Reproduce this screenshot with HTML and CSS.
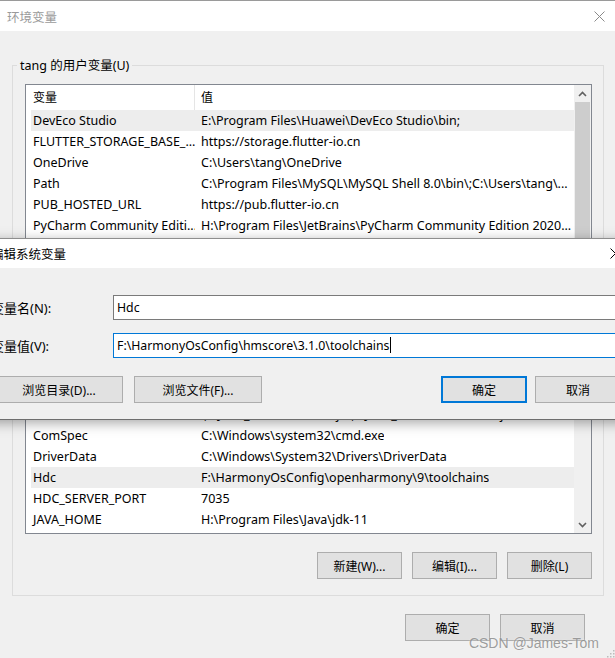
FILE: index.html
```html
<!DOCTYPE html>
<html lang="zh-CN">
<head>
<meta charset="utf-8">
<title>环境变量</title>
<link rel="stylesheet" href="styles.css">
</head>
<body>
<div class="win">
  <div class="titlebar">
    <span class="title">环境变量</span>
    <svg class="close" width="11" height="11" viewBox="0 0 11 11"><path d="M0.5 0.5L10.5 10.5M10.5 0.5L0.5 10.5" stroke="#8a8a8a" stroke-width="1" fill="none"/></svg>
  </div>
  <div class="winbody">
    <div class="group">
      <span class="legend">tang 的用户变量(U)</span>
      <div class="list">
        <div class="rows">
          <div class="hdr"><span class="c1">变量</span><span class="c2">值</span></div>
          <div class="row sel"><span class="c1">DevEco Studio</span><span class="c2">E:\Program Files\Huawei\DevEco Studio\bin;</span></div>
          <div class="row"><span class="c1">FLUTTER_STORAGE_BASE_...</span><span class="c2">https://storage.flutter-io.cn</span></div>
          <div class="row"><span class="c1">OneDrive</span><span class="c2">C:\Users\tang\OneDrive</span></div>
          <div class="row"><span class="c1">Path</span><span class="c2">C:\Program Files\MySQL\MySQL Shell 8.0\bin\;C:\Users\tang\...</span></div>
          <div class="row"><span class="c1">PUB_HOSTED_URL</span><span class="c2">https://pub.flutter-io.cn</span></div>
          <div class="row"><span class="c1">PyCharm Community Editi...</span><span class="c2">H:\Program Files\JetBrains\PyCharm Community Edition 2020...</span></div>
          <div class="row"><span class="c1">TEMP</span><span class="c2">C:\Users\tang\AppData\Local\Temp</span></div>
          <div class="row"><span class="c1">TMP</span><span class="c2">C:\Users\tang\AppData\Local\Temp</span></div>
          <div class="row"><span class="c1">ANDROID_HOME</span><span class="c2">D:\Android\Sdk</span></div>
          <div class="row"><span class="c1">ANDROID_SDK_HOME</span><span class="c2">D:\Android\avd</span></div>
          <div class="row"><span class="c1">ChocolateyInstall</span><span class="c2">C:\ProgramData\chocolatey</span></div>
          <div class="row"><span class="c1">CLASSPATH</span><span class="c2">.;%JAVA_HOME%\lib\dt.jar;%JAVA_HOME%\lib\tools.jar</span></div>
          <div class="row"><span class="c1">CLASSPATH</span><span class="c2">.;%JAVA_HOME%\lib\dt.jar;%JAVA_HOME%\lib\tools.jar</span></div>
          <div class="row"><span class="c1">CLASSPATH</span><span class="c2">.;%JAVA_HOME%\lib\dt.jar;%JAVA_HOME%\lib\tools.jar</span></div>
          <div class="row"><span class="c1">CLASSPATH</span><span class="c2">.;%JAVA_HOME%\lib\dt.jar;%JAVA_HOME%\lib\tools.jar</span></div>
          <div class="row"><span class="c1">ComSpec</span><span class="c2">C:\Windows\system32\cmd.exe</span></div>
          <div class="row"><span class="c1">DriverData</span><span class="c2">C:\Windows\System32\Drivers\DriverData</span></div>
          <div class="row sel"><span class="c1">Hdc</span><span class="c2">F:\HarmonyOsConfig\openharmony\9\toolchains</span></div>
          <div class="row"><span class="c1">HDC_SERVER_PORT</span><span class="c2">7035</span></div>
          <div class="row"><span class="c1">JAVA_HOME</span><span class="c2">H:\Program Files\Java\jdk-11</span></div>
        </div>
        <div class="sbar">
          <div class="arrow"><svg width="9" height="6" viewBox="0 0 9 6"><path d="M1 5L4.5 1.5L8 5" stroke="#606060" stroke-width="1.6" fill="none"/></svg></div>
          <div class="thumb"></div>
          <div class="track"></div>
          <div class="arrow"><svg width="9" height="6" viewBox="0 0 9 6"><path d="M1 1L4.5 4.5L8 1" stroke="#606060" stroke-width="1.6" fill="none"/></svg></div>
        </div>
      </div>
      <div class="btns">
        <button class="btn">新建(W)...</button>
        <button class="btn">编辑(I)...</button>
        <button class="btn">删除(L)</button>
      </div>
    </div>
    <div class="footer">
      <button class="btn">确定</button>
      <button class="btn">取消</button>
    </div>
  </div>
</div>

<div class="dlg">
  <div class="dtitle">
    <span>编辑系统变量</span>
    <svg class="dclose" width="11" height="11" viewBox="0 0 11 11"><path d="M0.5 0.5L10.5 10.5M10.5 0.5L0.5 10.5" stroke="#000" stroke-width="1" fill="none"/></svg>
  </div>
  <div class="dbody">
    <div class="form">
      <label class="lbl">变量名(N):</label>
      <div class="inp">Hdc</div>
      <label class="lbl">变量值(V):</label>
      <div class="inp focus">F:\HarmonyOsConfig\hmscore\3.1.0\toolchains<span class="caret"></span></div>
    </div>
    <div class="dbtns">
      <div class="grp">
        <button class="btn wide">浏览目录(D)...</button>
        <button class="btn wide">浏览文件(F)...</button>
      </div>
      <div class="grp grp2">
        <button class="btn mid def">确定</button>
        <button class="btn mid">取消</button>
      </div>
    </div>
  </div>
</div>

<div class="wm">CSDN @James-Tom</div>
<svg class="grip" width="9" height="9" viewBox="0 0 9 9">
  <rect x="7" y="1" width="1.5" height="1.5" fill="#bcbcbc"/>
  <rect x="4" y="4" width="1.5" height="1.5" fill="#bcbcbc"/>
  <rect x="7" y="4" width="1.5" height="1.5" fill="#bcbcbc"/>
  <rect x="1" y="7" width="1.5" height="1.5" fill="#bcbcbc"/>
  <rect x="4" y="7" width="1.5" height="1.5" fill="#bcbcbc"/>
  <rect x="7" y="7" width="1.5" height="1.5" fill="#bcbcbc"/>
</svg>
</body>
</html>
```

FILE: styles.css
```css
* { box-sizing: border-box; }

body {
  margin: 0;
  width: 615px;
  height: 658px;
  overflow: hidden;
  position: relative;
  background: #f0f0f0;
  font-family: "Noto Sans", "Noto Sans CJK SC", sans-serif;
  font-size: 12.5px;
  color: #000;
}

.win {
  border-top: 1px solid #9a9a9a;
}

.titlebar {
  height: 30px;
  background: #fff;
  display: flex;
  align-items: center;
  justify-content: space-between;
  padding: 0 10px 0 7px;
}

.title {
  color: #9a9a9a;
  font-size: 12.5px;
}

.winbody {
  padding-top: 34px;
}

.group {
  margin-left: 12px;
  width: 592px;
  border: 1px solid #dcdcdc;
  padding: 0 11px 16px 12px;
}

.legend {
  display: block;
  width: fit-content;
  margin: -9px 0 0 -8px;
  padding: 0 3px;
  background: #f0f0f0;
  line-height: 18px;
  font-size: 12.5px;
}

.list {
  margin-top: 9px;
  height: 450px;
  border: 1px solid #828790;
  background: #fff;
  display: flex;
}

.rows {
  flex: 1;
  overflow: hidden;
  padding-left: 5px;
}

.hdr, .row {
  display: flex;
  white-space: nowrap;
}

.hdr {
  height: 25px;
  line-height: 25px;
  font-size: 12px;
}

.row {
  height: 21px;
  line-height: 21px;
}

.row.sel {
  background: #ededed;
}

.c1 {
  width: 164px;
  flex: none;
  padding-left: 2px;
  overflow: hidden;
}

.hdr .c1 {
  border-right: 1px solid #e5e5e5;
}

.c2 {
  padding-left: 6px;
  overflow: hidden;
}

.sbar {
  width: 17px;
  flex: none;
  background: #f0f0f0;
  display: flex;
  flex-direction: column;
}

.arrow {
  height: 17px;
  display: flex;
  align-items: center;
  justify-content: center;
}

.thumb {
  height: 220px;
  margin: 0 1px;
  background: #cdcdcd;
}

.track {
  flex: 1;
}

.btns {
  margin-top: 18px;
  display: flex;
  justify-content: flex-end;
  gap: 10px;
}

.btn {
  width: 85px;
  height: 27px;
  background: #e1e1e1;
  border: 1px solid #adadad;
  font-family: "Noto Sans", "Noto Sans CJK SC", sans-serif;
  font-size: 12px;
  color: #000;
  padding: 0;
}

.footer {
  margin-top: 18px;
  display: flex;
  justify-content: flex-end;
  gap: 10px;
  padding-right: 30px;
}

/* edit dialog */
.dlg {
  position: absolute;
  top: 238px;
  left: -20px;
  width: 657px;
  border: 1px solid #8e8e8e;
  border-bottom-color: #6e6e6e;
  background: #f0f0f0;
  box-shadow: 0 3px 12px rgba(0, 0, 0, 0.35);
}

.dtitle {
  height: 29px;
  background: #fff;
  display: flex;
  align-items: center;
  justify-content: space-between;
  padding: 0 15px 0 10px;
  font-size: 12.5px;
}

.dbody {
  padding: 27px 15px 16px 14px;
}

.form {
  display: grid;
  grid-template-columns: 118px 1fr;
  row-gap: 13px;
  align-items: center;
}

.lbl {
  font-size: 13px;
  margin-left: -4px;
}

.inp {
  height: 25px;
  border: 1px solid #7a7a7a;
  background: #fff;
  padding-left: 3px;
  line-height: 23px;
  font-size: 12.3px;
  white-space: nowrap;
}

.inp.focus {
  border-color: #0078d7;
}

.caret {
  display: inline-block;
  width: 1px;
  height: 16px;
  background: #000;
  vertical-align: -3px;
}

.dbtns {
  margin-top: 18px;
  display: flex;
  justify-content: space-between;
}

.grp {
  display: flex;
  gap: 11px;
}

.grp2 {
  gap: 8px;
}

.btn.wide {
  width: 128px;
}

.btn.mid {
  width: 86px;
}

.btn.def {
  border: 2px solid #0078d7;
}

.wm {
  position: absolute;
  right: 16px;
  bottom: 7px;
  font-family: "Liberation Sans", sans-serif;
  font-size: 14px;
  color: rgba(140, 140, 140, 0.85);
  text-shadow: 0 0 2px rgba(255, 255, 255, 0.6);
}

.grip {
  position: absolute;
  right: 0;
  bottom: 0;
}
```
